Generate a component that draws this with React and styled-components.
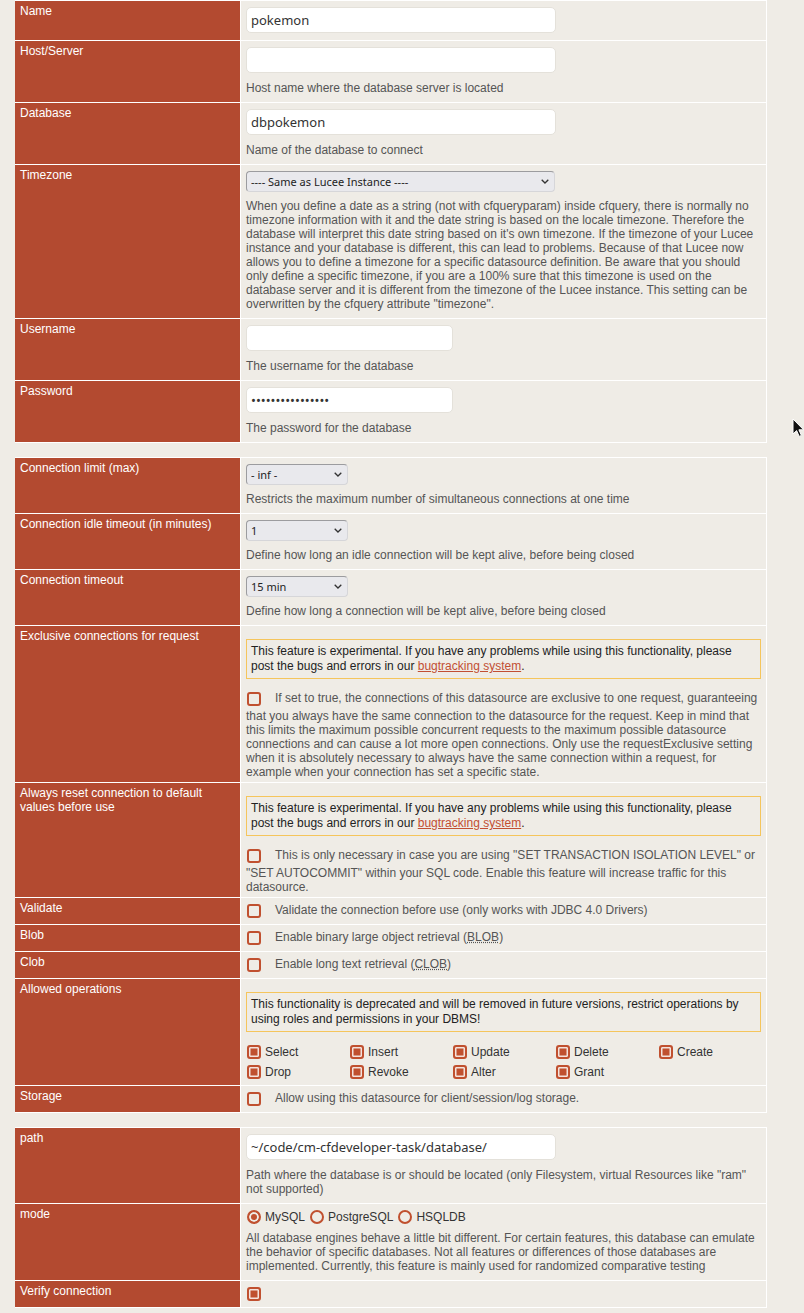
import React from 'react';
import styled, { createGlobalStyle } from 'styled-components';

const GlobalStyle = createGlobalStyle`
  html, body {
    margin: 0;
    padding: 0;
    background: #efece6;
  }
  body {
    font-family: "Liberation Sans", Arial, sans-serif;
    font-size: 12px;
  }
`

const Page = styled.div`
  position: relative;
  box-sizing: border-box;
  width: 804px;
  min-height: 1313px;
  padding: 0 0 0 15px;
`

const Table = styled.div`
  box-sizing: border-box;
  width: 752px;
  display: flex;
  flex-direction: column;
  gap: 1px;
  padding: 1px 1px 1px 0;
  margin-bottom: 14px;
  background: #fff;
`

const Row = styled.div`
  display: grid;
  grid-template-columns: 225px 1fr;
  gap: 1px;
`

const Label = styled.div`
  background: #b34a30;
  color: #fff;
  padding: 3px 5px;
  line-height: 14px;
`

const Value = styled.div`
  background: #efece6;
  color: #555;
  line-height: 14px;
  padding: ${p => (p.$tight ? '3px 5px' : '6px 5px 7px')};
`

const TextInput = styled.input`
  display: block;
  box-sizing: border-box;
  width: ${p => p.$w}px;
  height: 26px;
  margin: 0 0 ${p => (p.$last ? 0 : 8)}px;
  padding: 0 4px;
  border: 1px solid #e4e1da;
  border-radius: 5px;
  background: #fff;
  color: #333;
  font: 13px "Noto Sans", sans-serif;
  outline: none;
`

const SelectWrap = styled.div`
  position: relative;
  width: ${p => p.$w}px;
  height: 21px;
  margin-bottom: 7px;
`

const Select = styled.select`
  appearance: none;
  -webkit-appearance: none;
  box-sizing: border-box;
  width: 100%;
  height: 100%;
  margin: 0;
  padding: 0 4px;
  border: 1px solid;
  border-color: #9c9c9f #d6d6d9 #d6d6d9 #9c9c9f;
  border-radius: 4px;
  background: #e9e9ed;
  color: #222;
  font: 11px "Noto Sans", sans-serif;
`

const Chevron = styled.svg`
  position: absolute;
  right: 6px;
  top: 8px;
  pointer-events: none;
`

const Desc = styled.div`
  color: #555;
`

const Warning = styled.div`
  border: 1px solid #f5c55c;
  padding: 4px 5px 4px 4px;
  margin: 10px 0;
  color: #222;
  line-height: 15px;
`

const Link = styled.a`
  color: #c24f33;
  text-decoration: underline;
`

const Check = styled.input.attrs({ type: 'checkbox' })`
  appearance: none;
  -webkit-appearance: none;
  box-sizing: border-box;
  width: 14px;
  height: 14px;
  margin: ${p => (p.$inline ? '3px 14px 3px 1px' : '0 4px 0 1px')};
  border: 2px solid #c0502f;
  border-radius: 3px;
  background: transparent;
  vertical-align: middle;
  flex: none;
  &:checked {
    background: #c0502f;
    box-shadow: inset 0 0 0 1.5px #f4e2dc;
  }
`

const Radio = styled.input.attrs({ type: 'radio' })`
  appearance: none;
  -webkit-appearance: none;
  box-sizing: border-box;
  width: 14px;
  height: 14px;
  margin: 0 4px 0 1px;
  border: 2px solid #c0502f;
  border-radius: 50%;
  background: transparent;
  flex: none;
  &:checked {
    background: #c0502f;
    box-shadow: inset 0 0 0 2px #efece6;
  }
`

const Ops = styled.div`
  display: grid;
  grid-template-columns: repeat(5, 103px);
  grid-auto-rows: 20px;
  align-items: center;
`

const Option = styled.label`
  display: flex;
  align-items: center;
  color: #333;
`

const Modes = styled.div`
  display: flex;
  align-items: center;
  height: 14px;
  margin-bottom: 7px;
  color: #333;
`

const ModeLabel = styled.span`
  margin-right: 4px;
`

const Cursor = styled.svg`
  position: absolute;
  left: 792px;
  top: 418px;
`

const SelectBox = ({ w, value }) => (
  <SelectWrap $w={w}>
    <Select defaultValue={value}>
      <option>{value}</option>
    </Select>
    <Chevron width="8" height="5" viewBox="0 0 8 5">
      <polyline points="0.7,0.7 4,4 7.3,0.7" fill="none" stroke="#333" strokeWidth="1.3" />
    </Chevron>
  </SelectWrap>
)

const ExperimentalNote = () => (
  <Warning>
    This feature is experimental. If you have any problems while using this functionality, please
    post the bugs and errors in our <Link href="#">bugtracking system</Link>.
  </Warning>
)

const operations = ['Select', 'Insert', 'Update', 'Delete', 'Create', 'Drop', 'Revoke', 'Alter', 'Grant']

export default function App() {
  return (
    <Page>
      <GlobalStyle />

      <Table>
        <Row>
          <Label>Name</Label>
          <Value>
            <TextInput $w={310} $last defaultValue="pokemon" />
          </Value>
        </Row>
        <Row>
          <Label>Host/Server</Label>
          <Value>
            <TextInput $w={310} defaultValue="" />
            <Desc>Host name where the database server is located</Desc>
          </Value>
        </Row>
        <Row>
          <Label>Database</Label>
          <Value>
            <TextInput $w={310} defaultValue="dbpokemon" />
            <Desc>Name of the database to connect</Desc>
          </Value>
        </Row>
        <Row>
          <Label>Timezone</Label>
          <Value>
            <SelectBox w={309} value="---- Same as Lucee Instance ----" />
            <Desc>
              When you define a date as a string (not with cfqueryparam) inside cfquery, there is normally no
              timezone information with it and the date string is based on the locale timezone. Therefore the
              database will interpret this date string based on it's own timezone. If the timezone of your Lucee
              instance and your database is different, this can lead to problems. Because of that Lucee now
              allows you to define a timezone for a specific datasource definition. Be aware that you should
              only define a specific timezone, if you are a 100% sure that this timezone is used on the
              database server and it is different from the timezone of the Lucee instance. This setting can be
              overwritten by the cfquery attribute "timezone".
            </Desc>
          </Value>
        </Row>
        <Row>
          <Label>Username</Label>
          <Value>
            <TextInput $w={207} defaultValue="" />
            <Desc>The username for the database</Desc>
          </Value>
        </Row>
        <Row>
          <Label>Password</Label>
          <Value>
            <TextInput $w={207} type="password" defaultValue="pokemonpassword1" />
            <Desc>The password for the database</Desc>
          </Value>
        </Row>
      </Table>

      <Table>
        <Row>
          <Label>Connection limit (max)</Label>
          <Value>
            <SelectBox w={102} value="- inf -" />
            <Desc>Restricts the maximum number of simultaneous connections at one time</Desc>
          </Value>
        </Row>
        <Row>
          <Label>Connection idle timeout (in minutes)</Label>
          <Value>
            <SelectBox w={102} value="1" />
            <Desc>Define how long an idle connection will be kept alive, before being closed</Desc>
          </Value>
        </Row>
        <Row>
          <Label>Connection timeout</Label>
          <Value>
            <SelectBox w={102} value="15 min" />
            <Desc>Define how long a connection will be kept alive, before being closed</Desc>
          </Value>
        </Row>
        <Row>
          <Label>Exclusive connections for request</Label>
          <Value $tight>
            <ExperimentalNote />
            <Desc>
              <Check $inline />
              If set to true, the connections of this datasource are exclusive to one request, guaranteeing
              that you always have the same connection to the datasource for the request. Keep in mind that
              this limits the maximum possible concurrent requests to the maximum possible datasource
              connections and can cause a lot more open connections. Only use the requestExclusive setting
              when it is absolutely necessary to always have the same connection within a request, for
              example when your connection has set a specific state.
            </Desc>
          </Value>
        </Row>
        <Row>
          <Label>Always reset connection to default values before use</Label>
          <Value $tight>
            <ExperimentalNote />
            <Desc>
              <Check $inline />
              This is only necessary in case you are using "SET TRANSACTION ISOLATION LEVEL" or
              "SET AUTOCOMMIT" within your SQL code. Enable this feature will increase traffic for this
              datasource.
            </Desc>
          </Value>
        </Row>
        <Row>
          <Label>Validate</Label>
          <Value $tight>
            <Desc>
              <Check $inline />
              Validate the connection before use (only works with JDBC 4.0 Drivers)
            </Desc>
          </Value>
        </Row>
        <Row>
          <Label>Blob</Label>
          <Value $tight>
            <Desc>
              <Check $inline />
              Enable binary large object retrieval (<abbr title="Binary Large Object">BLOB</abbr>)
            </Desc>
          </Value>
        </Row>
        <Row>
          <Label>Clob</Label>
          <Value $tight>
            <Desc>
              <Check $inline />
              Enable long text retrieval (<abbr title="Character Large Object">CLOB</abbr>)
            </Desc>
          </Value>
        </Row>
        <Row>
          <Label>Allowed operations</Label>
          <Value $tight>
            <Warning>
              This functionality is deprecated and will be removed in future versions, restrict operations by
              using roles and permissions in your DBMS!
            </Warning>
            <Ops>
              {operations.map(op => (
                <Option key={op}>
                  <Check defaultChecked />
                  {op}
                </Option>
              ))}
            </Ops>
          </Value>
        </Row>
        <Row>
          <Label>Storage</Label>
          <Value $tight>
            <Desc>
              <Check $inline />
              Allow using this datasource for client/session/log storage.
            </Desc>
          </Value>
        </Row>
      </Table>

      <Table>
        <Row>
          <Label>path</Label>
          <Value>
            <TextInput $w={310} defaultValue="~/code/cm-cfdeveloper-task/database/" />
            <Desc>
              Path where the database is or should be located (only Filesystem, virtual Resources like "ram"
              not supported)
            </Desc>
          </Value>
        </Row>
        <Row>
          <Label>mode</Label>
          <Value>
            <Modes>
              <Radio name="mode" defaultChecked />
              <ModeLabel>MySQL</ModeLabel>
              <Radio name="mode" />
              <ModeLabel>PostgreSQL</ModeLabel>
              <Radio name="mode" />
              <ModeLabel>HSQLDB</ModeLabel>
            </Modes>
            <Desc>
              All database engines behave a little bit different. For certain features, this database can emulate
              the behavior of specific databases. Not all features or differences of those databases are
              implemented. Currently, this feature is mainly used for randomized comparative testing
            </Desc>
          </Value>
        </Row>
        <Row>
          <Label>Verify connection</Label>
          <Value $tight>
            <Desc>
              <Check $inline defaultChecked />
            </Desc>
          </Value>
        </Row>
      </Table>

      <Cursor width="13" height="20" viewBox="0 0 13 20">
        <path d="M1 1 L1 16 L4.6 12.6 L7.2 18.4 L9.4 17.4 L6.9 11.8 L11.6 11.8 Z" fill="#111" stroke="#fff" strokeWidth="1" strokeLinejoin="round" />
      </Cursor>
    </Page>
  );
}
